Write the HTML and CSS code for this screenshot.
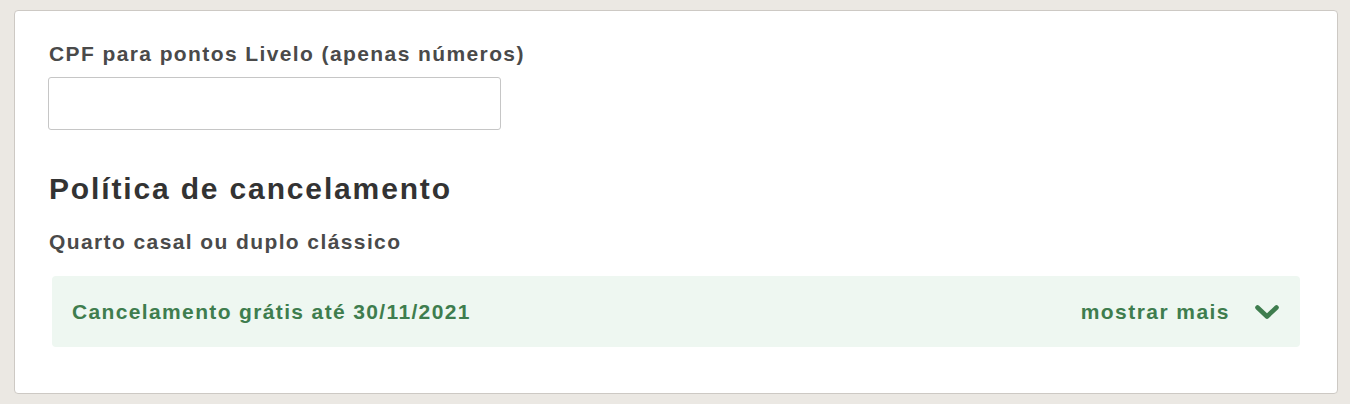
FILE: index.html
```html
<!DOCTYPE html>
<html lang="pt-BR">

<head>
    <meta charset="UTF-8">
    <meta name="viewport" content="width=device-width, initial-scale=1.0">
    <title>Pontos e cancelamento</title>
    <link rel="stylesheet" href="styles.css">
</head>

<body>
    <div class="card">
        <label class="field-label" for="cpf">CPF para pontos Livelo (apenas números)</label>
        <input type="text" id="cpf" class="field-input" inputmode="numeric">

        <div class="policy">
            <h2 class="policy-title">Política de cancelamento</h2>
            <h3 class="policy-room">Quarto casal ou duplo clássico</h3>

            <div class="policy-box">
                <span class="policy-free">Cancelamento grátis até 30/11/2021</span>
                <button class="more-btn" type="button">
                    <span>mostrar mais</span>
                    <svg class="chevron" width="24" height="14" viewBox="0 0 24 14">
                        <polyline points="2.5,2.5 12,11.5 21.5,2.5" fill="none" stroke="currentColor"
                            stroke-width="4.6" stroke-linecap="round" stroke-linejoin="round" />
                    </svg>
                </button>
            </div>
        </div>
    </div>
</body>

</html>
```

FILE: styles.css
```css
* {
    margin: 0;
    padding: 0;
    box-sizing: border-box;
}

body {
    background-color: #ebe8e3;
    padding: 10px 12px 0 14px;
    font-family: "Liberation Sans", Arial, sans-serif;
}

.card {
    display: flex;
    flex-direction: column;
    width: 1324px;
    height: 384px;
    padding: 31px 34px 0 34px;
    background-color: #fff;
    border: 1px solid #cdc9c4;
    border-radius: 4px;
}

.field-label {
    display: block;
    font-size: 21px;
    line-height: 24px;
    font-weight: bold;
    letter-spacing: 1.4px;
    color: #4a4a4a;
}

.field-input {
    width: 453px;
    height: 53px;
    margin-top: 11px;
    margin-left: -1px;
    border: 1px solid #c6c6c6;
    border-radius: 3px;
    font-size: 18px;
    padding: 0 12px;
}

.policy {
    display: flex;
    flex-direction: column;
    margin-top: 42px;
}

.policy-title {
    font-size: 30px;
    line-height: 34px;
    letter-spacing: 1.85px;
    color: #333;
}

.policy-room {
    margin-top: 24px;
    font-size: 21px;
    line-height: 24px;
    letter-spacing: 1.4px;
    color: #4a4a4a;
}

.policy-box {
    display: flex;
    align-items: center;
    justify-content: space-between;
    height: 71px;
    margin: 22px 3px 0 3px;
    padding: 0 21px 0 20px;
    background-color: #eef7f1;
    border-radius: 4px;
    color: #3e7d4e;
    font-size: 21px;
    font-weight: bold;
    letter-spacing: 1.36px;
}

.more-btn {
    display: flex;
    align-items: center;
    gap: 25px;
    border: none;
    background: none;
    color: inherit;
    font: inherit;
    letter-spacing: 1.45px;
    cursor: pointer;
}

.chevron {
    display: block;
}
```
